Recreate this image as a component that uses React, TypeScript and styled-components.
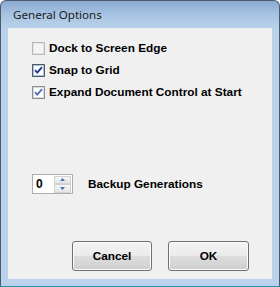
import React from 'react';
import styled, {createGlobalStyle} from 'styled-components';

const GlobalStyle = createGlobalStyle`
  html, body {
    margin: 0;
    padding: 0;
    background: #ffffff;
  }
`;

const Window = styled.div`
  box-sizing: border-box;
  width: 280px;
  height: 287px;
  display: flex;
  flex-direction: column;
  border: 1px solid #4a5a6c;
  border-bottom-color: #2b8fb0;
  border-radius: 6px 6px 0 0;
  background: linear-gradient(180deg, #8aaad0 0px, #a9c4e3 14px, #b9d1ea 27px, #bad2ec 100%);
  overflow: hidden;
`;

const TitleBar = styled.div`
  height: 27px;
  flex: none;
  display: flex;
  align-items: center;
  padding-left: 12px;
  padding-bottom: 1px;
  box-sizing: border-box;
  font-family: 'Noto Sans', 'Open Sans', sans-serif;
  font-size: 11.6px;
  color: #1b1b1b;
`;

const Client = styled.div`
  flex: 1;
  margin: 0 7px 7px 7px;
  background: #f0f0f0;
  display: flex;
  flex-direction: column;
  padding: 14px 0 8px 24px;
  font-family: 'Liberation Sans', Arial, sans-serif;
  font-weight: bold;
  font-size: 11.8px;
  color: #000000;
`;

const OptionList = styled.div`
  display: flex;
  flex-direction: column;
  gap: 9px;
`;

const OptionRow = styled.label`
  display: flex;
  align-items: center;
  height: 13px;
  gap: 4px;
`;

const Box = styled.span<{$tone: 'off' | 'focus' | 'dim'}>`
  box-sizing: border-box;
  width: 13px;
  height: 13px;
  flex: none;
  display: flex;
  align-items: center;
  justify-content: center;
  border: 1px solid
    ${p => (p.$tone === 'off' ? '#b8b8b8' : p.$tone === 'focus' ? '#5a5a5a' : '#8e8f8f')};
  background: ${p => (p.$tone === 'off' ? '#f4f4f4' : '#ffffff')};
  box-shadow: inset 0 0 0 1px
    ${p => (p.$tone === 'off' ? '#e4e4e4' : p.$tone === 'focus' ? '#9cc4ea' : '#d6dbe2')};
`;

const Label = styled.span`
  white-space: nowrap;
  line-height: 13px;
`;

const SpinRow = styled.div`
  display: flex;
  align-items: center;
  gap: 15px;
  margin-top: 75px;
`;

const SpinBox = styled.div`
  box-sizing: border-box;
  width: 41px;
  height: 20px;
  display: flex;
  align-items: center;
  justify-content: space-between;
  border: 1px solid #abadb3;
  background: #ffffff;
  padding: 0 1px 0 3px;
`;

const SpinValue = styled.span`
  font-size: 12px;
  line-height: 16px;
`;

const SpinButtons = styled.div`
  width: 17px;
  height: 17px;
  display: flex;
  flex-direction: column;
  justify-content: space-between;
  background: #c8c8c8;
`;

const SpinButton = styled.div`
  height: 7px;
  display: flex;
  align-items: center;
  justify-content: center;
  background: linear-gradient(180deg, #f6f6f6, #e4e4e4);
  border: 1px solid #d2d2d2;
`;

const ButtonBar = styled.div`
  margin-top: auto;
  display: flex;
  gap: 16px;
  padding-left: 40px;
`;

const Button = styled.button<{$wide?: boolean}>`
  box-sizing: border-box;
  width: ${p => (p.$wide ? 81 : 80)}px;
  height: 30px;
  border: 1px solid #707070;
  border-radius: 3px;
  background: linear-gradient(180deg, #f4f4f4 0%, #ebebeb 48%, #dddddd 52%, #cfcfcf 100%);
  box-shadow: inset 0 0 0 1px #fbfbfb;
  font-family: 'Liberation Sans', Arial, sans-serif;
  font-weight: bold;
  font-size: 11.8px;
  color: #000000;
  padding: 0;
`;

const Check = ({color}: {color: string}) => (
  <svg width="9" height="9" viewBox="0 0 9 9">
    <path d="M1 4.2 L3.3 6.6 L8 1.2" fill="none" stroke={color} strokeWidth="1.9" />
  </svg>
);

const Arrow = ({up}: {up?: boolean}) => (
  <svg width="5" height="3" viewBox="0 0 5 3">
    <path d={up ? 'M0 3 L2.5 0 L5 3 Z' : 'M0 0 L2.5 3 L5 0 Z'} fill="#4d6fb4" />
  </svg>
);

const options: {text: string; tone: 'off' | 'focus' | 'dim'; checked: boolean}[] = [
  {text: 'Dock to Screen Edge', tone: 'off', checked: false},
  {text: 'Snap to Grid', tone: 'focus', checked: true},
  {text: 'Expand Document Control at Start', tone: 'dim', checked: true},
];

const App = () => {
  return (
    <>
      <GlobalStyle />
      <Window>
        <TitleBar>General Options</TitleBar>
        <Client>
          <OptionList>
            {options.map(o => (
              <OptionRow key={o.text}>
                <Box $tone={o.tone}>{o.checked && <Check color={o.tone === 'focus' ? '#21388f' : '#5a70b8'} />}</Box>
                <Label>{o.text}</Label>
              </OptionRow>
            ))}
          </OptionList>
          <SpinRow>
            <SpinBox>
              <SpinValue>0</SpinValue>
              <SpinButtons>
                <SpinButton>
                  <Arrow up />
                </SpinButton>
                <SpinButton>
                  <Arrow />
                </SpinButton>
              </SpinButtons>
            </SpinBox>
            <Label>Backup Generations</Label>
          </SpinRow>
          <ButtonBar>
            <Button>Cancel</Button>
            <Button $wide>OK</Button>
          </ButtonBar>
        </Client>
      </Window>
    </>
  );
};

export default App;
